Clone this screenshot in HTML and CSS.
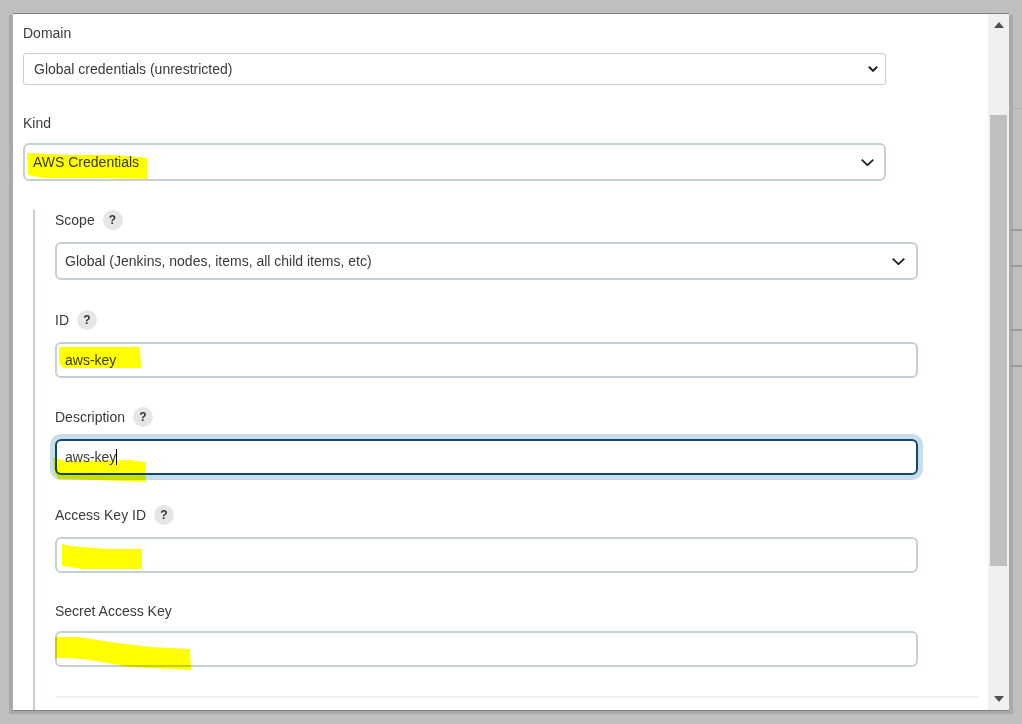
FILE: index.html
```html
<!DOCTYPE html>
<html lang="en">
<head>
<meta charset="utf-8">
<title>AWS Credentials</title>
<link rel="stylesheet" href="styles.css">
</head>
<body>
<main class="modal">
  <form class="content">
    <div class="label first">Domain</div>
    <div class="field thin select">
      <span>Global credentials (unrestricted)</span>
      <svg class="chev chev-small" viewBox="0 0 10 6"><path d="M.8.8 5 4.8 9.2.8"/></svg>
    </div>
    <div class="label kind">Kind</div>
    <div class="field select tall flush">
      <span>AWS Credentials</span>
      <svg class="chev" viewBox="0 0 13 7"><path d="M.7.7 6.5 6.2 12.3.7"/></svg>
    </div>
    <div class="nested">
      <div class="label row-label">Scope <span class="help">?</span></div>
      <div class="field select tall">
        <span>Global (Jenkins, nodes, items, all child items, etc)</span>
        <svg class="chev" viewBox="0 0 13 7"><path d="M.7.7 6.5 6.2 12.3.7"/></svg>
      </div>
      <div class="label row-label gap-30">ID <span class="help">?</span></div>
      <div class="field">aws-key</div>
      <div class="label row-label gap-29">Description <span class="help">?</span></div>
      <div class="field focus">aws-key<span class="caret"></span></div>
      <div class="label row-label gap-30">Access Key ID <span class="help">?</span></div>
      <div class="field"></div>
      <div class="label secret">Secret Access Key</div>
      <div class="field"></div>
      <div class="divider"></div>
    </div>
  </form>
  <div class="scrollbar">
    <div class="sb-btn"><i class="tri-up"></i></div>
    <div class="thumb"></div>
    <div class="sb-btn sb-down"><i class="tri-down"></i></div>
  </div>
</main>
<i class="bg-line faint line-a"></i>
<i class="bg-line line-b"></i>
<i class="bg-line line-c"></i>
<i class="bg-line line-d"></i>
<i class="bg-line line-e"></i>
<svg class="marker" viewBox="0 0 1022 724" aria-hidden="true">
  <polygon points="27,153 70,155 113,155 138,157 147,158 147,179 100,178 43,178 28,175"/>
  <polygon points="59,347 140,347 141,368 63,368 59,363"/>
  <polygon points="53,458 67,461 130,460 145,462 146,482 95,480 58,479 54,470"/>
  <polygon points="62,544 70,546 108,549 142,549 142,569 83,569 62,566"/>
  <polygon points="55,637 78,637 117,643 150,647 190,649 191,670 130,667 90,660 70,658 55,658"/>
</svg>
</body>
</html>
```

FILE: styles.css
```css
* { box-sizing: border-box; }
html, body { margin: 0; height: 100%; }
body {
  position: relative;
  width: 1022px;
  height: 724px;
  padding: 13px 13px 0;
  overflow: hidden;
  background: #bfbfbf;
  font-family: "Liberation Sans", Arial, sans-serif;
  font-size: 14px;
  color: #3a3a3a;
}
.modal {
  display: flex;
  width: 996px;
  height: 698px;
  background: #fff;
  border-top: 1px solid #808080;
  border-bottom: 1px solid #808080;
  box-shadow: -4px 2px 0 #a9a9a9, 4px 2px 0 #a9a9a9, -4px 3px 0 #a9a9a9, 4px 3px 0 #a9a9a9;
}
.content {
  flex: 1;
  min-width: 0;
  padding: 9px 10px 0;
  overflow: hidden;
}
.label {
  display: flex;
  align-items: center;
  height: 20px;
  line-height: 20px;
  margin-bottom: 10px;
}
.kind { margin-top: 28px; }
.row-label { margin-bottom: 12px; }
.gap-30 { margin-top: 30px; }
.gap-29 { margin-top: 29px; }
.secret { margin-top: 28px; }
.help {
  display: flex;
  align-items: center;
  justify-content: center;
  width: 20px;
  height: 20px;
  margin-left: 7.8px;
  border-radius: 50%;
  background: #e6e6e6;
  font-size: 12px;
  font-weight: 700;
  color: #333;
}
.field {
  display: flex;
  align-items: center;
  width: 863px;
  height: 36px;
  padding: 0 8px;
  border: 2px solid #c5d0d3;
  border-radius: 6px;
  background: transparent;
}
.select { justify-content: space-between; }
.tall { height: 38px; }
.flush { padding-left: 8px; padding-right: 10px; }
.nested .select { padding-right: 11px; }
.thin {
  height: 32px;
  padding: 0 7px 0 10px;
  border-width: 1px;
  border-radius: 3px;
}
.focus {
  border-color: #14466b;
  box-shadow: 0 0 0 5px #c8deec;
}
.caret {
  display: inline-block;
  width: 1px;
  height: 16px;
  background: #000;
}
.chev {
  display: block;
  flex: none;
  width: 13px;
  height: 7px;
  fill: none;
  stroke: #22222c;
  stroke-width: 1.8;
}
.chev-small {
  width: 10px;
  height: 6px;
  stroke-width: 2;
}
.nested {
  margin: 29px 0 0 10px;
  padding-left: 20px;
  padding-bottom: 40px;
  border-left: 2px solid #c5d0d3;
}
.divider {
  height: 2px;
  margin-top: 29px;
  background: #f2f2f5;
}
.scrollbar {
  display: flex;
  flex: none;
  flex-direction: column;
  width: 21px;
  background: #f0f0f0;
}
.sb-btn {
  display: flex;
  flex: none;
  align-items: center;
  justify-content: center;
  height: 21px;
}
.sb-down {
  margin-top: auto;
  padding-bottom: 2px;
}
.thumb {
  flex: none;
  height: 451px;
  margin: 80px 2px 0;
  background: #bfbfbf;
}
.tri-up, .tri-down {
  display: block;
  width: 0;
  height: 0;
  border-left: 5px solid transparent;
  border-right: 5px solid transparent;
}
.tri-up { border-bottom: 6px solid #505050; }
.tri-down { border-top: 6px solid #505050; }
.bg-line {
  position: absolute;
  left: 1009px;
  right: 0;
  height: 2px;
  background: #989e9e;
}
.faint { height: 1px; background: #b2b2b2; }
.line-a { top: 108px; }
.line-b { top: 229px; }
.line-c { top: 265px; }
.line-d { top: 329px; }
.line-e { top: 365px; }
.marker {
  position: absolute;
  top: 0;
  left: 0;
  width: 1022px;
  height: 724px;
  fill: #ffff00;
  mix-blend-mode: multiply;
  pointer-events: none;
}
```
